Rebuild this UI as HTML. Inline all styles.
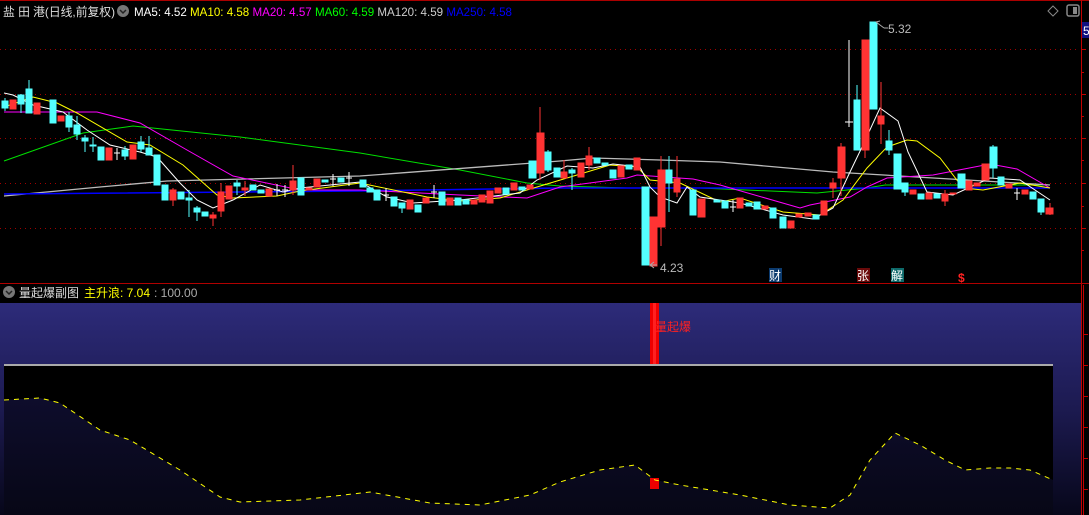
<!DOCTYPE html>
<html><head><meta charset="utf-8"><style>
html,body{margin:0;padding:0;background:#000;width:1089px;height:515px;overflow:hidden}
svg{display:block}
text{font-family:"Liberation Sans","Noto Sans CJK SC",sans-serif}
</style></head><body>
<svg width="1089" height="515" viewBox="0 0 1089 515" xmlns="http://www.w3.org/2000/svg">
<defs>
<linearGradient id="bg" x1="0" y1="0" x2="0" y2="1">
<stop offset="0" stop-color="#2d2b7a"/><stop offset="0.5" stop-color="#1c1a50"/><stop offset="1" stop-color="#07071a"/>
</linearGradient>
<linearGradient id="ar" x1="0" y1="0" x2="0" y2="1">
<stop offset="0" stop-color="#0e0d2c"/><stop offset="1" stop-color="#070716"/>
</linearGradient>
</defs>
<rect width="1089" height="515" fill="#000"/>
<line x1="0" y1="0.5" x2="1089" y2="0.5" stroke="#a00" />
<g stroke="#a00000" stroke-dasharray="1,4">
<line x1="0" y1="49.5" x2="1080" y2="49.5"/><line x1="0" y1="94.5" x2="1080" y2="94.5"/>
<line x1="0" y1="138.5" x2="1080" y2="138.5"/><line x1="0" y1="183.5" x2="1080" y2="183.5"/>
<line x1="0" y1="228.5" x2="1080" y2="228.5"/>
</g>
<line x1="1081.5" y1="0" x2="1081.5" y2="515" stroke="#c00000"/>
<line x1="1083.5" y1="285" x2="1083.5" y2="515" stroke="#c00000"/>
<g stroke="#c00000"><line x1="1081" y1="49.5" x2="1086" y2="49.5"/><line x1="1081" y1="72.5" x2="1084" y2="72.5"/><line x1="1081" y1="94.5" x2="1086" y2="94.5"/><line x1="1081" y1="116.5" x2="1084" y2="116.5"/><line x1="1081" y1="138.5" x2="1086" y2="138.5"/><line x1="1081" y1="160.5" x2="1084" y2="160.5"/><line x1="1081" y1="183.5" x2="1086" y2="183.5"/><line x1="1081" y1="206.5" x2="1084" y2="206.5"/><line x1="1081" y1="228.5" x2="1086" y2="228.5"/><line x1="1081" y1="250.5" x2="1084" y2="250.5"/>
<line x1="1083" y1="334.5" x2="1088" y2="334.5"/><line x1="1083" y1="365.5" x2="1088" y2="365.5"/><line x1="1083" y1="396.5" x2="1088" y2="396.5"/><line x1="1083" y1="427.5" x2="1088" y2="427.5"/><line x1="1083" y1="458.5" x2="1088" y2="458.5"/><line x1="1083" y1="489.5" x2="1088" y2="489.5"/></g>
<rect x="1082" y="22" width="7" height="16" fill="#101080"/><text x="1083" y="35" fill="#fff" font-size="12">5</text>
<path d="M1053 6 L1058 11 L1053 16 L1048 11Z" fill="none" stroke="#888"/>
<rect x="1067" y="5" width="12" height="11" rx="2" fill="none" stroke="#888" stroke-width="1.5"/><rect x="1073" y="7" width="4" height="7" fill="#888"/>
<text x="3" y="16" fill="#ddd" font-size="12" textLength="112" lengthAdjust="spacingAndGlyphs">盐 田 港(日线,前复权)</text>
<circle cx="123" cy="11" r="6" fill="#777"/><path d="M120 10 L123 13 L126 10" stroke="#222" stroke-width="1.5" fill="none"/>
<text x="134" y="16" font-size="12" textLength="378" lengthAdjust="spacingAndGlyphs"><tspan fill="#fff">MA5: 4.52 </tspan><tspan fill="#ff0"> MA10: 4.58 </tspan><tspan fill="#f0f"> MA20: 4.57 </tspan><tspan fill="#0f0"> MA60: 4.59 </tspan><tspan fill="#ccc"> MA120: 4.59 </tspan><tspan fill="#00f"> MA250: 4.58</tspan></text>
<g fill="none" stroke-width="1">
<polyline stroke="#00e000" points="4,161 83,133 133,126 240,137 360,153 460,170 527,183 560,186 627,188 700,188 817,193 867,188 885,185 1050,185"/>
<polyline stroke="#bbb" stroke-width="1.3" points="4,196 100,187 167,181 360,176 560,161 593,158 660,160 720,162 833,172 967,180 1050,185"/>
<polyline stroke="#0000ff" stroke-width="1.5" points="4,194 360,191 560,188 1050,188"/>
<polyline stroke="#f0f" points="4,112 97,112 140,123 187,150 233,176 300,190 360,190 460,195 527,198 560,187 627,178 637,175 693,179 720,185 800,208 810,205 850,197 867,187 887,178 933,175 990,164 1017,169 1050,188"/>
<polyline stroke="#ff0" points="4,107 33,97 57,103 77,113 127,142 150,145 183,165 217,195 233,198 277,196 300,191 360,183 427,197 460,201 500,198 537,187 577,175 610,165 637,167 650,180 680,183 720,202 740,198 783,212 820,215 843,200 867,168 887,147 907,140 917,141 940,158 963,188 983,190 1020,183 1050,188"/>
<polyline stroke="#fff" points="4,93 13,95 33,105 63,112 87,130 110,145 140,152 157,157 180,183 197,200 213,208 233,200 260,185 283,192 300,188 360,182 387,197 413,203 460,200 520,193 537,180 567,166 593,168 613,164 640,167 650,187 660,197 677,203 687,187 700,197 740,203 783,215 813,219 833,208 850,172 863,145 880,108 898,121 908,152 927,192 953,195 990,178 1020,180 1050,200"/>
</g>
<g>
<g fill="#54ffff" stroke="#54ffff">
<line x1="5" y1="98" x2="5" y2="111"/><rect x="2" y="101" width="6" height="7"/>
<line x1="21" y1="94" x2="21" y2="113"/><rect x="18" y="95" width="6" height="9"/>
<line x1="29" y1="80" x2="29" y2="113"/><rect x="26" y="89" width="6" height="24"/>
<rect x="50" y="100" width="6" height="23"/>
<line x1="69" y1="112" x2="69" y2="132"/><rect x="66" y="116" width="6" height="11"/>
<line x1="77" y1="116" x2="77" y2="140"/><rect x="74" y="125" width="6" height="9"/>
<line x1="85" y1="135" x2="85" y2="152"/><rect x="82" y="138" width="6" height="3"/>
<line x1="93" y1="137" x2="93" y2="152"/><rect x="90" y="145" width="6" height="1"/>
<rect x="98" y="147" width="6" height="13"/>
<line x1="125" y1="146" x2="125" y2="160"/><rect x="122" y="150" width="6" height="6"/>
<line x1="141" y1="136" x2="141" y2="152"/><rect x="138" y="142" width="6" height="7"/>
<line x1="149" y1="136" x2="149" y2="155"/><rect x="146" y="148" width="6" height="7"/>
<rect x="154" y="155" width="6" height="30"/><rect x="162" y="185" width="6" height="15"/>
<rect x="178" y="192" width="6" height="7"/>
<line x1="189" y1="190" x2="189" y2="217"/><rect x="186" y="198" width="6" height="2"/>
<line x1="197" y1="206" x2="197" y2="221"/><rect x="194" y="208" width="6" height="4"/>
<rect x="202" y="212" width="6" height="4"/>
<line x1="237" y1="180" x2="237" y2="195"/><rect x="234" y="183" width="6" height="3"/>
<rect x="250" y="185" width="6" height="5"/><rect x="258" y="190" width="6" height="3"/>
<rect x="298" y="178" width="6" height="17"/><rect x="322" y="180" width="6" height="2"/><rect x="338" y="178" width="6" height="4"/>
<rect x="360" y="180" width="6" height="7"/><rect x="367" y="188" width="6" height="4"/><rect x="374" y="190" width="6" height="10"/>
<rect x="391" y="197" width="6" height="9"/><line x1="402" y1="203" x2="402" y2="213"/><rect x="399" y="203" width="6" height="5"/>
<rect x="415" y="205" width="6" height="7"/><rect x="439" y="192" width="6" height="13"/><rect x="455" y="198" width="6" height="7"/><rect x="463" y="200" width="6" height="4"/>
<rect x="503" y="188" width="6" height="6"/><rect x="519" y="187" width="6" height="3"/>
<rect x="529" y="161" width="7" height="17"/><line x1="548" y1="150" x2="548" y2="172"/><rect x="545" y="152" width="6" height="18"/>
<rect x="554" y="168" width="6" height="9"/><line x1="572" y1="168" x2="572" y2="190"/><rect x="569" y="170" width="6" height="3"/>
<rect x="594" y="158" width="6" height="5"/><rect x="602" y="163" width="6" height="2"/><rect x="610" y="170" width="6" height="8"/>
<rect x="626" y="165" width="6" height="4"/>
<rect x="642" y="187" width="7" height="78"/>
<line x1="669" y1="156" x2="669" y2="212"/><rect x="666" y="170" width="6" height="13"/>
<rect x="690" y="190" width="6" height="25"/><rect x="714" y="200" width="6" height="2"/><rect x="722" y="201" width="6" height="7"/>
<rect x="746" y="203" width="6" height="3"/><rect x="754" y="202" width="6" height="7"/><rect x="770" y="208" width="6" height="10"/>
<rect x="780" y="217" width="6" height="11"/><rect x="813" y="215" width="6" height="4"/>
<line x1="857" y1="85" x2="857" y2="150"/><rect x="854" y="100" width="6" height="50"/>
<rect x="870" y="22" width="7" height="87"/>
<line x1="889" y1="130" x2="889" y2="155"/><rect x="886" y="141" width="6" height="9"/>
<rect x="894" y="154" width="7" height="35"/><line x1="905" y1="183" x2="905" y2="196"/><rect x="902" y="183" width="6" height="9"/>
<rect x="918" y="194" width="6" height="5"/><rect x="934" y="194" width="6" height="4"/>
<rect x="958" y="174" width="7" height="14"/>
<line x1="993" y1="145" x2="993" y2="178"/><rect x="990" y="147" width="7" height="21"/>
<rect x="998" y="177" width="6" height="8"/><rect x="1030" y="192" width="6" height="7"/>
<line x1="1041" y1="199" x2="1041" y2="215"/><rect x="1038" y="199" width="6" height="13"/>
</g>
<g fill="#ff3333" stroke="#ff3333">
<rect x="10" y="100" width="6" height="9"/><rect x="34" y="103" width="6" height="11"/><rect x="58" y="116" width="6" height="5"/>
<rect x="106" y="148" width="6" height="12"/><rect x="130" y="145" width="6" height="14"/>
<line x1="173" y1="188" x2="173" y2="206"/><rect x="170" y="190" width="6" height="10"/>
<line x1="213" y1="212" x2="213" y2="226"/><rect x="210" y="215" width="6" height="3"/>
<line x1="221" y1="183" x2="221" y2="217"/><rect x="218" y="192" width="6" height="19"/><rect x="226" y="186" width="6" height="13"/>
<line x1="245" y1="181" x2="245" y2="196"/><rect x="242" y="188" width="6" height="2"/><rect x="266" y="189" width="6" height="7"/>
<line x1="293" y1="165" x2="293" y2="195"/><rect x="290" y="181" width="6" height="9"/><rect x="306" y="188" width="6" height="2"/><rect x="314" y="179" width="6" height="8"/>
<rect x="407" y="200" width="6" height="9"/><rect x="423" y="198" width="6" height="5"/><rect x="447" y="198" width="6" height="7"/>
<rect x="471" y="200" width="6" height="4"/><rect x="479" y="195" width="6" height="7"/><rect x="487" y="191" width="6" height="12"/><rect x="495" y="188" width="6" height="5"/>
<rect x="511" y="183" width="6" height="7"/><rect x="527" y="185" width="6" height="4"/>
<line x1="540" y1="107" x2="540" y2="180"/><rect x="537" y="133" width="7" height="40"/>
<line x1="564" y1="160" x2="564" y2="178"/><rect x="561" y="172" width="6" height="6"/>
<rect x="578" y="163" width="6" height="14"/><line x1="589" y1="147" x2="589" y2="170"/><rect x="586" y="156" width="6" height="9"/>
<rect x="618" y="166" width="6" height="11"/><rect x="634" y="158" width="6" height="12"/>
<rect x="650" y="217" width="7" height="49"/>
<line x1="661" y1="156" x2="661" y2="246"/><rect x="658" y="170" width="7" height="57"/>
<line x1="677" y1="156" x2="677" y2="197"/><rect x="674" y="179" width="6" height="13"/>
<rect x="698" y="199" width="7" height="18"/><rect x="737" y="198" width="6" height="10"/><rect x="762" y="206" width="6" height="3"/>
<rect x="788" y="221" width="6" height="7"/><rect x="796" y="214" width="6" height="3"/><rect x="805" y="213" width="6" height="3"/>
<rect x="821" y="201" width="6" height="14"/>
<line x1="833" y1="178" x2="833" y2="198"/><rect x="830" y="183" width="6" height="5"/>
<line x1="841" y1="143" x2="841" y2="196"/><rect x="838" y="147" width="7" height="31"/>
<line x1="865" y1="40" x2="865" y2="158"/><rect x="862" y="40" width="7" height="110"/>
<line x1="881" y1="82" x2="881" y2="144"/><rect x="878" y="116" width="6" height="8"/>
<rect x="910" y="190" width="6" height="4"/><rect x="926" y="193" width="6" height="6"/>
<line x1="945" y1="190" x2="945" y2="206"/><rect x="942" y="194" width="6" height="7"/>
<rect x="950" y="193" width="6" height="1"/><rect x="966" y="181" width="6" height="9"/><rect x="974" y="183" width="6" height="3"/>
<rect x="982" y="164" width="7" height="16"/><rect x="1006" y="184" width="6" height="4"/><rect x="1022" y="190" width="6" height="4"/>
<line x1="1050" y1="203" x2="1050" y2="215"/><rect x="1046" y="208" width="7" height="6"/>
</g>
<g stroke="#fff" fill="none">
<path d="M117 148v12M114 153h6M285 185v12M282 190h6M277 184v12M274 190h6M333 174v12M330 179h6M349 172v14M346 178h6M386 188v13M383 195h6M434 185v13M431 192h6M733 200v12M730 207h6M849 40v87M845 122h8M1017 188v12M1014 193h6"/>
</g>
</g>
<path d="M884 28 L876 22 M876 22 L880 21 M884 28 L888 28" stroke="#aaa" fill="none"/>
<text x="888" y="33" fill="#bbb" font-size="12">5.32</text>
<path d="M650 265 L654 262 M650 265 L654 268 M650 265 L657 265" stroke="#aaa" fill="none"/>
<text x="660" y="272" fill="#bbb" font-size="12">4.23</text>
<rect x="769" y="268" width="13" height="14" fill="#0b3a6e"/><text x="769" y="280" fill="#fff" font-size="12">财</text>
<rect x="857" y="268" width="13" height="14" fill="#6a0a0a"/><text x="857" y="280" fill="#fff" font-size="12">张</text>
<rect x="891" y="268" width="13" height="14" fill="#0e6a6a"/><text x="891" y="280" fill="#fff" font-size="12">解</text>
<text x="958" y="282" fill="#f22" font-size="12" font-weight="bold">$</text>
<line x1="0" y1="283.5" x2="1089" y2="283.5" stroke="#b00000"/>
<circle cx="9" cy="292" r="6" fill="#777"/><path d="M6 291 L9 294 L12 291" stroke="#222" stroke-width="1.5" fill="none"/>
<text x="19" y="297" fill="#ddd" font-size="12">量起爆副图</text>
<text x="84" y="297" fill="#ff0" font-size="12">主升浪: 7.04</text>
<text x="154" y="297" fill="#aaa" font-size="12"> : 100.00</text>
<rect x="0" y="303" width="1081" height="212" fill="url(#bg)"/>
<rect x="4" y="365" width="1049" height="150" fill="#000"/>
<line x1="4" y1="365" x2="1053" y2="365" stroke="#aaa" stroke-width="2"/>
<path d="M4,400 L40,398 L60,403 L100,430 L130,440 L180,470 L220,497 L240,502 L300,500 L370,492 L430,503 L480,505 L530,495 L560,482 L600,470 L635,465 L655,480 L680,485 L740,495 L790,505 L830,508 L850,495 L870,460 L895,433 L920,445 L945,460 L965,470 L990,468 L1010,468 L1030,470 L1053,480 L1053,515 L4,515Z" fill="url(#ar)"/>
<rect x="650" y="478" width="9" height="11" fill="#e00"/>
<polyline fill="none" stroke="#ffff00" stroke-dasharray="5,5" points="4,400 40,398 60,403 100,430 130,440 180,470 220,497 240,502 300,500 370,492 430,503 480,505 530,495 560,482 600,470 635,465 655,480 680,485 740,495 790,505 830,508 850,495 870,460 895,433 920,445 945,460 965,470 990,468 1010,468 1030,470 1053,480"/>
<rect x="650" y="303" width="9" height="61" fill="#e00"/><rect x="653" y="303" width="3" height="61" fill="#ff2020"/>
<text x="655" y="331" fill="#ff2020" font-size="12">量起爆</text>
</svg>
</body></html>
